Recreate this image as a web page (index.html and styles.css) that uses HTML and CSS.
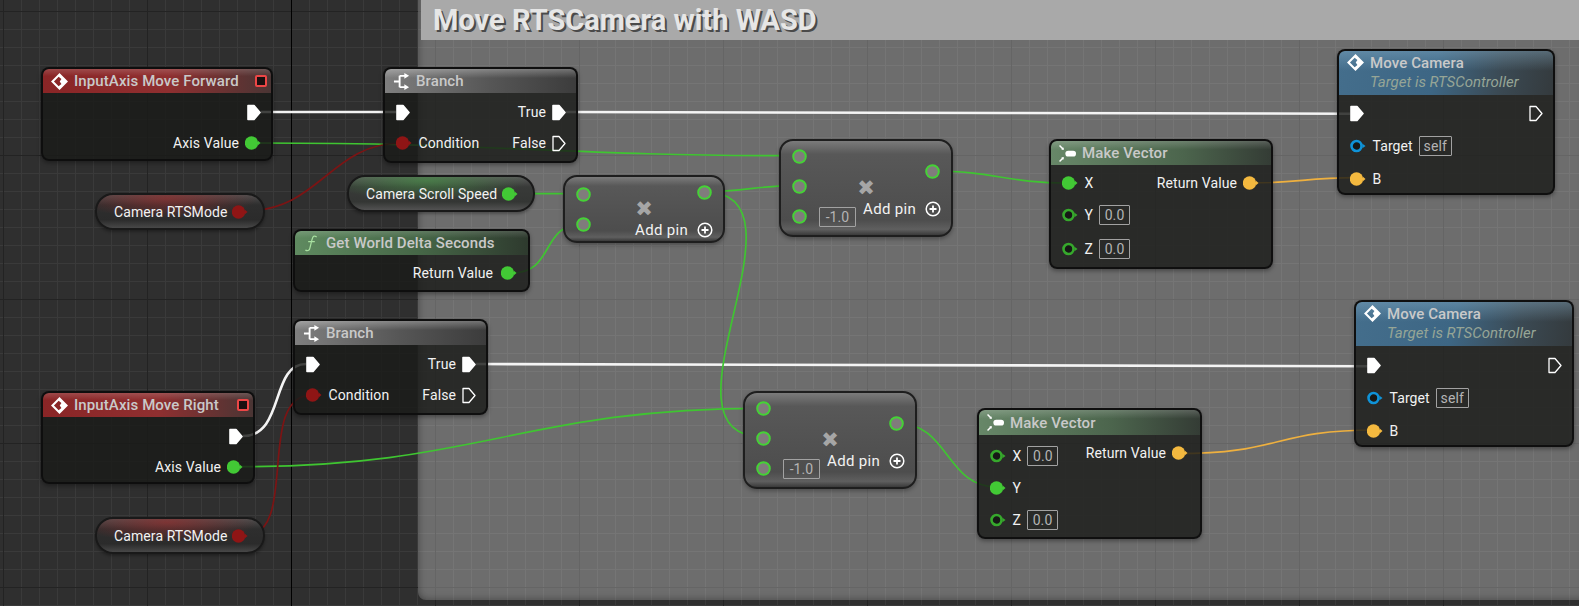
FILE: index.html
```html
<!DOCTYPE html>
<html lang="en">
<head>
<meta charset="utf-8">
<title>Move RTSCamera with WASD</title>
<link rel="stylesheet" href="styles.css">
</head>
<body>
<svg class="defs" width="0" height="0" aria-hidden="true">
  <symbol id="diamond" viewBox="0 0 16 16"><path fill="#fff" fill-rule="evenodd" d="M8 0 16 8 8 16 0 8ZM7.2 3.6 2.8 8 7.2 12.4 9.800 10.400 8.200 8 9.800 5.600Z"/></symbol>
  <symbol id="branch" viewBox="0 0 16 18"><path fill="none" stroke="#fff" stroke-width="2" d="M0 9H6M6 3V15M6 3H12M6 15H12"/><path fill="#fff" d="M11 0 16 3 11 6ZM11 12 16 15 11 18Z"/></symbol>
  <symbol id="vector" viewBox="0 0 16 16"><rect x="6" y="5.500" width="10" height="5.400" rx="2.700" fill="#fff"/><path stroke="#fff" stroke-width="1.400" d="M0.500 0.500 4 4M0.500 15.500 4 12"/><path fill="#fff" d="M4.600 4.600 2 4 4 2ZM4.600 11.400 2 12 4 14Z"/></symbol>
  <symbol id="func" viewBox="0 0 15 18"><path fill="none" stroke="#a8e0a0" stroke-width="1.300" d="M13 2C10 0 9 1.500 8 5L6 13C5.500 16 4 17.500 1 16M4 7H11"/></symbol>
  <symbol id="exec" viewBox="0 0 14 17"><path fill="#fff" stroke="#fff" stroke-width="1.600" stroke-linejoin="round" d="M1 1.500H7L13 8.500 7 15.500H1Z"/></symbol>
  <symbol id="exec-open" viewBox="0 0 14 17"><path fill="none" stroke="#fff" stroke-width="1.300" stroke-linejoin="round" d="M1 1.500H7L13 8.500 7 15.500H1Z"/></symbol>
  <symbol id="pin-green" viewBox="0 0 16 14"><circle cx="6.500" cy="7" r="6.700" fill="#42c935"/><path fill="#42c935" d="M13 4.800 15.500 7 13 9.200Z"/></symbol>
  <symbol id="pin-red" viewBox="0 0 16 14"><circle cx="6.500" cy="7" r="6.700" fill="#8f1515"/><path fill="#8f1515" d="M13 4.800 15.500 7 13 9.200Z"/></symbol>
  <symbol id="pin-yellow" viewBox="0 0 16 14"><circle cx="6.500" cy="7" r="6.700" fill="#f4b93f"/><path fill="#f4b93f" d="M13 4.800 15.500 7 13 9.200Z"/></symbol>
  <symbol id="pin-green-open" viewBox="0 0 16 14"><circle cx="6.500" cy="7" r="5" fill="#161816" stroke="#36a82c" stroke-width="2.600"/><path fill="#36a82c" d="M12.500 4.800 15.500 7 12.500 9.200Z"/></symbol>
  <symbol id="pin-blue-open" viewBox="0 0 16 14"><circle cx="6.500" cy="7" r="5" fill="#161816" stroke="#0f93d8" stroke-width="2.600"/><path fill="#0f93d8" d="M12.500 4.800 15.500 7 12.500 9.200Z"/></symbol>
  <symbol id="ring" viewBox="0 0 15 15"><circle cx="7.500" cy="7.500" r="6.300" fill="#807c7c" stroke="#45d236" stroke-width="2"/></symbol>
  <symbol id="plus" viewBox="0 0 16 16"><circle cx="8" cy="8" r="6.800" fill="none" stroke="#fff" stroke-width="1.500"/><path stroke="#fff" stroke-width="1.800" d="M4.500 8H11.500M8 4.500V11.500"/></symbol>
</svg>

<main class="canvas">
  <div class="axis"></div>

  <section class="comment">
    <h1 class="comment-title">Move RTSCamera with WASD</h1>
  </section>

  <svg class="wires" viewBox="0 0 1579 606" aria-hidden="true">
    <g class="wire-exec">
      <path d="M261 112H396"/>
      <path d="M566 112C800 112 1100 113.700 1350 113.700"/>
      <path d="M243 436C285 436 270 364 306 364"/>
      <path d="M476 364C800 364 1100 366.300 1369 366.300"/>
    </g>
    <g class="wire-green">
      <path d="M258 143C500 143 560 155.700 799 155.700"/>
      <path d="M515 193.700H583"/>
      <path d="M512 273C555 273 540 224 583 224"/>
      <path d="M704 191.700C745 191.700 760 185.300 799 185.300"/>
      <path d="M704 191.700C820 191.700 647 437 763 437"/>
      <path d="M932 171C995 171 1005 183 1068 183"/>
      <path d="M240 466.700C480 466.700 523 408.300 763 408.300"/>
      <path d="M896 423C950 423 945 487 997 487"/>
    </g>
    <g class="wire-red">
      <path d="M245 211C320 211 330 143 402 143"/>
      <path d="M245 535.700C300 535.700 255 395 312 395"/>
    </g>
    <g class="wire-yellow">
      <path d="M1250 183C1300 183 1305 177.700 1356 177.700"/>
      <path d="M1178 453.700C1280 453.700 1275 430 1375 430"/>
    </g>
  </svg>

  <article class="node n-fwd">
    <header class="head head-red"><svg class="ico"><use href="#diamond"/></svg><span class="title">InputAxis Move Forward</span><span class="stop"></span></header>
    <div class="body pad-35">
      <div class="col end">
        <div class="row"><svg class="exec"><use href="#exec"/></svg></div>
        <div class="row"><span>Axis Value</span><svg class="pin"><use href="#pin-green"/></svg></div>
      </div>
    </div>
  </article>

  <article class="node n-branch1">
    <header class="head head-grey"><svg class="ico"><use href="#branch"/></svg><span class="title">Branch</span></header>
    <div class="body pad-35">
      <div class="col">
        <div class="row"><svg class="exec"><use href="#exec"/></svg></div>
        <div class="row"><svg class="pin"><use href="#pin-red"/></svg><span>Condition</span></div>
      </div>
      <div class="col end">
        <div class="row"><span>True</span><svg class="exec"><use href="#exec"/></svg></div>
        <div class="row"><span>False</span><svg class="exec"><use href="#exec-open"/></svg></div>
      </div>
    </div>
  </article>

  <article class="pill pill-red n-rts1"><span>Camera RTSMode</span><svg class="pin"><use href="#pin-red"/></svg></article>
  <article class="pill pill-green n-scroll"><span>Camera Scroll Speed</span><svg class="pin"><use href="#pin-green"/></svg></article>

  <article class="node n-world">
    <header class="head head-green"><svg class="ico"><use href="#func"/></svg><span class="title">Get World Delta Seconds</span></header>
    <div class="body pad-25">
      <div class="col end">
        <div class="row"><span>Return Value</span><svg class="pin"><use href="#pin-green"/></svg></div>
      </div>
    </div>
  </article>

  <article class="compact n-add1">
    <div class="cross">&#10006;</div>
    <div class="col-in">
      <svg class="ring"><use href="#ring"/></svg>
      <svg class="ring"><use href="#ring"/></svg>
    </div>
    <div class="col-out">
      <svg class="ring"><use href="#ring"/></svg>
      <div class="add"><span>Add pin</span><svg class="plus"><use href="#plus"/></svg></div>
    </div>
  </article>

  <article class="compact n-add2">
    <div class="cross">&#10006;</div>
    <div class="col-in">
      <svg class="ring"><use href="#ring"/></svg>
      <svg class="ring"><use href="#ring"/></svg>
      <div class="ring-row"><svg class="ring"><use href="#ring"/></svg><span class="val val-neg">-1.0</span></div>
    </div>
    <div class="col-out">
      <svg class="ring"><use href="#ring"/></svg>
      <div class="add"><span>Add pin</span><svg class="plus"><use href="#plus"/></svg></div>
    </div>
  </article>

  <article class="compact n-add3">
    <div class="cross">&#10006;</div>
    <div class="col-in">
      <svg class="ring"><use href="#ring"/></svg>
      <svg class="ring"><use href="#ring"/></svg>
      <div class="ring-row"><svg class="ring"><use href="#ring"/></svg><span class="val val-neg">-1.0</span></div>
    </div>
    <div class="col-out">
      <svg class="ring"><use href="#ring"/></svg>
      <div class="add"><span>Add pin</span><svg class="plus"><use href="#plus"/></svg></div>
    </div>
  </article>

  <article class="node n-mv1">
    <header class="head head-sage"><svg class="ico"><use href="#vector"/></svg><span class="title">Make Vector</span></header>
    <div class="body pad-25">
      <div class="col">
        <div class="row"><svg class="pin"><use href="#pin-green"/></svg><span>X</span></div>
        <div class="row tall"><svg class="pin"><use href="#pin-green-open"/></svg><span>Y</span><span class="val">0.0</span></div>
        <div class="row tall"><svg class="pin"><use href="#pin-green-open"/></svg><span>Z</span><span class="val">0.0</span></div>
      </div>
      <div class="col end">
        <div class="row"><span>Return Value</span><svg class="pin"><use href="#pin-yellow"/></svg></div>
      </div>
    </div>
  </article>

  <article class="node n-mv2">
    <header class="head head-sage"><svg class="ico"><use href="#vector"/></svg><span class="title">Make Vector</span></header>
    <div class="body pad-4">
      <div class="col">
        <div class="row tall"><svg class="pin"><use href="#pin-green-open"/></svg><span>X</span><span class="val">0.0</span></div>
        <div class="row"><svg class="pin"><use href="#pin-green"/></svg><span>Y</span></div>
        <div class="row tall"><svg class="pin"><use href="#pin-green-open"/></svg><span>Z</span><span class="val">0.0</span></div>
      </div>
      <div class="col end">
        <div class="row"><span>Return Value</span><svg class="pin"><use href="#pin-yellow"/></svg></div>
      </div>
    </div>
  </article>

  <article class="node n-mc1">
    <header class="head head-blue"><svg class="ico"><use href="#diamond"/></svg><div class="stack"><span class="title">Move Camera</span><span class="sub">Target is RTSController</span></div></header>
    <div class="body pad-3">
      <div class="col">
        <div class="row"><svg class="exec"><use href="#exec"/></svg></div>
        <div class="row target"><svg class="pin"><use href="#pin-blue-open"/></svg><span>Target</span><span class="val val-self">self</span></div>
        <div class="row"><svg class="pin"><use href="#pin-yellow"/></svg><span>B</span></div>
      </div>
      <div class="col end">
        <div class="row"><svg class="exec"><use href="#exec-open"/></svg></div>
      </div>
    </div>
  </article>

  <article class="node n-mc2">
    <header class="head head-blue"><svg class="ico"><use href="#diamond"/></svg><div class="stack"><span class="title">Move Camera</span><span class="sub">Target is RTSController</span></div></header>
    <div class="body pad-4">
      <div class="col">
        <div class="row"><svg class="exec"><use href="#exec"/></svg></div>
        <div class="row target"><svg class="pin"><use href="#pin-blue-open"/></svg><span>Target</span><span class="val val-self">self</span></div>
        <div class="row"><svg class="pin"><use href="#pin-yellow"/></svg><span>B</span></div>
      </div>
      <div class="col end">
        <div class="row"><svg class="exec"><use href="#exec-open"/></svg></div>
      </div>
    </div>
  </article>

  <article class="node n-right">
    <header class="head head-red"><svg class="ico"><use href="#diamond"/></svg><span class="title">InputAxis Move Right</span><span class="stop"></span></header>
    <div class="body pad-35">
      <div class="col end">
        <div class="row"><svg class="exec"><use href="#exec"/></svg></div>
        <div class="row"><span>Axis Value</span><svg class="pin"><use href="#pin-green"/></svg></div>
      </div>
    </div>
  </article>

  <article class="node n-branch2">
    <header class="head head-grey"><svg class="ico"><use href="#branch"/></svg><span class="title">Branch</span></header>
    <div class="body pad-35">
      <div class="col">
        <div class="row"><svg class="exec"><use href="#exec"/></svg></div>
        <div class="row"><svg class="pin"><use href="#pin-red"/></svg><span>Condition</span></div>
      </div>
      <div class="col end">
        <div class="row"><span>True</span><svg class="exec"><use href="#exec"/></svg></div>
        <div class="row"><span>False</span><svg class="exec"><use href="#exec-open"/></svg></div>
      </div>
    </div>
  </article>

  <article class="pill pill-red n-rts2"><span>Camera RTSMode</span><svg class="pin"><use href="#pin-red"/></svg></article>
</main>
</body>
</html>
```

FILE: styles.css
```css
* { box-sizing: border-box; }

html, body {
  margin: 0;
  width: 1579px;
  height: 606px;
  overflow: hidden;
}

body {
  font-family: Roboto, "Liberation Sans", sans-serif;
  font-size: 14px;
  letter-spacing: .1px;
  color: #f2f2f2;
  background: #2f2f2f;
}

.defs { position: absolute; }

.canvas {
  position: relative;
  width: 1579px;
  height: 606px;
  overflow: hidden;
  background-color: #2f2f2f;
  background-image:
    linear-gradient(90deg, #232323 1px, transparent 1px),
    linear-gradient(180deg, #232323 1px, transparent 1px),
    linear-gradient(90deg, #3a3a3a 1px, transparent 1px),
    linear-gradient(180deg, #3a3a3a 1px, transparent 1px);
  background-size: 144px 144px, 144px 144px, 18px 18px, 18px 18px;
  background-position: 3px 11px;
}

.axis {
  position: absolute;
  left: 291px;
  top: 0;
  width: 1px;
  height: 606px;
  background: #000;
}

.comment {
  position: absolute;
  left: 418px;
  top: 0;
  width: 1161px;
  height: 600px;
  background: rgba(255, 255, 255, .3);
  border-bottom-left-radius: 8px;
  box-shadow: inset 7px 0 6px -5px rgba(0, 0, 0, .22), inset 0 -7px 6px -5px rgba(0, 0, 0, .22);
}

.comment-title {
  margin: 0 0 0 3px;
  height: 40px;
  padding: 0 0 0 12px;
  background: #a9a9a9;
  font-size: 29px;
  font-weight: 700;
  letter-spacing: 0;
  line-height: 40px;
  color: #e6e6e6;
  text-shadow: 2px 2px 0 #4a4a4a;
}

.wires {
  position: absolute;
  left: 0;
  top: 0;
  width: 1579px;
  height: 606px;
  fill: none;
}

.wire-exec { stroke: #f4f4f4; stroke-width: 2.6; }
.wire-green { stroke: #3fc531; stroke-width: 1.7; }
.wire-red { stroke: #7c1414; stroke-width: 1.7; }
.wire-yellow { stroke: #eeb03f; stroke-width: 1.7; }

/* node shell */
.node {
  position: absolute;
  display: flex;
  flex-direction: column;
  border: 2px solid rgba(14, 14, 14, .92);
  border-radius: 8px;
  background: rgba(26, 27, 25, .82);
  box-shadow: 0 2px 4px rgba(0, 0, 0, .35);
  overflow: hidden;
}

.head {
  flex: none;
  display: flex;
  align-items: center;
  gap: 6px;
  height: 24px;
  padding: 0 4px 0 8px;
  border-radius: 5px 5px 0 0;
}

.head-red {
  background:
    linear-gradient(180deg, rgba(255, 255, 255, .16), transparent 30%),
    linear-gradient(90deg, #8a2526, #8f2f30 55%, #4a3534 100%);
}
.head-grey {
  background:
    linear-gradient(180deg, rgba(255, 255, 255, .28), transparent 38%),
    linear-gradient(90deg, #7f7f7f, #565656 55%, #3c3c3c);
}
.head-green {
  background:
    linear-gradient(180deg, rgba(255, 255, 255, .14), transparent 30%),
    linear-gradient(90deg, #5f8a60, #456546 55%, #2e3a2e);
}
.head-sage {
  background:
    linear-gradient(180deg, rgba(255, 255, 255, .18), transparent 35%),
    linear-gradient(90deg, #678768, #4c654d 60%, #343c35);
}
.head-blue {
  height: 44px;
  align-items: flex-start;
  padding-top: 3px;
  background:
    linear-gradient(180deg, rgba(150, 190, 215, .35), transparent 45%),
    linear-gradient(100deg, #446e8c, #3d6684 45%, #3b4a54 75%, #343a3d);
}

.ico { flex: none; width: 17px; height: 17px; }
.title { font-size: 15px; font-weight: 500; letter-spacing: .1px; color: #c9c9c9; white-space: nowrap; line-height: 18px; }

.stack { display: flex; flex-direction: column; }
.sub { font-size: 15px; font-style: italic; color: #96a596; line-height: 21px; letter-spacing: 0; white-space: nowrap; }

.stop {
  width: 12px;
  height: 12px;
  margin-left: auto;
  border: 2.5px solid #ec4646;
  border-radius: 2px;
  background: #1a1010;
}

.body {
  flex: 1;
  display: flex;
  justify-content: space-between;
  padding: 0 10px 0 10.5px;
}
.pad-25 { padding-top: 2.5px; }
.pad-3 { padding-top: 3px; }
.pad-35 { padding-top: 3.5px; }
.pad-4 { padding-top: 4px; }
.body > .end:only-child { margin-left: auto; }

.col { display: flex; flex-direction: column; }
.col.end { align-items: flex-end; }

.row {
  display: flex;
  align-items: center;
  gap: 6px;
  height: 31px;
  white-space: nowrap;
}
.col:not(.end) > .row { gap: 7px; }
.row.tall { height: 33px; }
.row.target { height: 34px; }

.pin { flex: none; width: 16px; height: 14px; overflow: visible; }
.exec { flex: none; width: 14px; height: 17px; }

.val {
  height: 20px;
  width: 31px;
  border: 1px solid #a2a2a2;
  border-radius: 1px;
  color: #b4b4b4;
  line-height: 18px;
  text-align: center;
  margin-left: -1px;
}
.val-self { width: 33px; }
.val-neg { width: 37px; margin-left: 0; }

/* node places on the graph */
.n-fwd { left: 41px; top: 67px; width: 232px; height: 94px; }
.n-branch1 { left: 383px; top: 67px; width: 195px; height: 96px; }
.n-world { left: 293px; top: 229px; width: 237px; height: 63px; }
.n-mv1 { left: 1049px; top: 139px; width: 224px; height: 130px; }
.n-mv2 { left: 977px; top: 408px; width: 225px; height: 131px; }
.n-mc1 { left: 1337px; top: 49px; width: 218px; height: 146px; }
.n-mc2 { left: 1354px; top: 300px; width: 220px; height: 147px; }
.n-right { left: 41px; top: 391px; width: 214px; height: 93px; }
.n-branch2 { left: 293px; top: 319px; width: 195px; height: 96px; }

.n-world .body { padding-right: 11px; }
.n-world .row { gap: 8px; }
.n-mv1 .body, .n-mv2 .body { padding-right: 12px; }
.n-mv1 .col:first-child .row:last-child { height: 35px; }
.n-mv2 .head { height: 25px; }
.n-mv2 .col.end { margin-top: -1.5px; }

/* variable pills */
.pill {
  position: absolute;
  display: flex;
  align-items: center;
  justify-content: space-between;
  height: 37px;
  padding: 0 15px 0 17px;
  border: 2px solid #191919;
  border-radius: 18px;
  box-shadow: 0 2px 3px rgba(0, 0, 0, .3);
  white-space: nowrap;
}
.pill-red {
  background:
    radial-gradient(ellipse 55% 60% at 42% 10%, rgba(160, 44, 44, .62), transparent 100%),
    linear-gradient(180deg, #4e4e4e, #2e2e2e 30%, #2b2b2b 75%, #484848);
}
.pill-green {
  background:
    radial-gradient(ellipse 55% 60% at 42% 10%, rgba(70, 150, 70, .62), transparent 100%),
    linear-gradient(180deg, #5a5a5a, #383a38 30%, #343634 75%, #525252);
}
.n-rts1 { left: 95px; top: 193px; width: 170px; }
.n-rts2 { left: 95px; top: 517px; width: 170px; }
.n-scroll { left: 347px; top: 175px; width: 188px; }

/* compact math nodes */
.compact {
  position: absolute;
  display: flex;
  justify-content: space-between;
  align-items: center;
  padding: 0 10px 0 11px;
  border: 2px solid #1e1e1e;
  border-radius: 14px;
  background: linear-gradient(180deg, #7b7b7b, #585858 14%, #4d4d4d 84%, #5f5f5f 94%, #3a3a3a);
  box-shadow: 0 2px 4px rgba(0, 0, 0, .3);
}
.n-add1 { left: 563px; top: 175px; width: 162px; height: 68px; }
.n-add2 { left: 779px; top: 139px; width: 174px; height: 98px; }
.n-add3 { left: 743px; top: 391px; width: 174px; height: 98px; }

.cross {
  position: absolute;
  top: 50%;
  left: 50%;
  transform: translate(-50%, -50%);
  color: #a6a6a6;
  font-family: "DejaVu Sans", sans-serif;
  font-size: 21px;
  line-height: 18px;
}

.col-in { position: relative; display: flex; flex-direction: column; gap: 15px; }
.n-add2 .col-in, .n-add3 .col-in { margin-top: -3px; }
.col-out { position: relative; display: flex; flex-direction: column; align-items: flex-end; gap: 19.5px; margin-top: 8px; }
.ring-row { display: flex; align-items: center; gap: 12px; height: 15px; }
.ring { flex: none; display: block; width: 15px; height: 15px; }
.col-out > .ring { margin-right: 1px; }

.add { display: flex; align-items: center; gap: 9px; height: 22px; font-size: 15px; letter-spacing: .3px; white-space: nowrap; }
.plus { flex: none; width: 16px; height: 16px; }
```
